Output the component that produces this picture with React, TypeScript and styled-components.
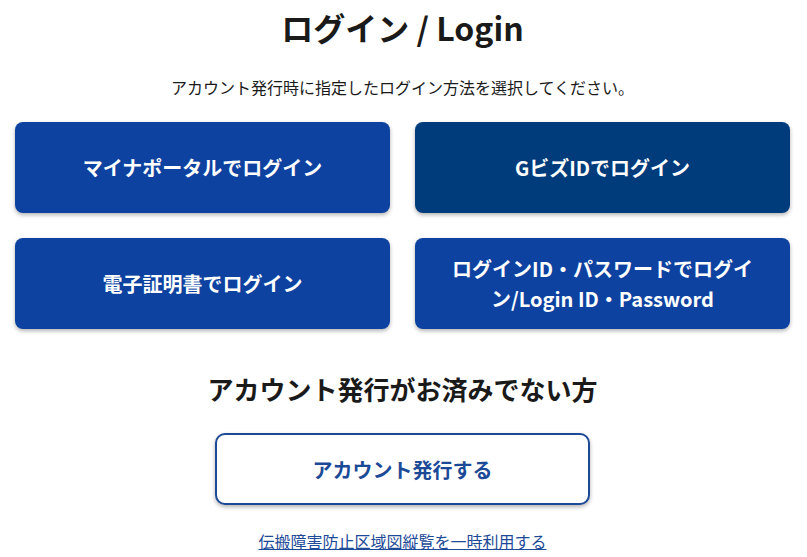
import React from "react";
import styled, { createGlobalStyle } from "styled-components";

const Global = createGlobalStyle`
  html, body { margin: 0; padding: 0; background: #ffffff; }
  body { font-family: "Noto Sans CJK JP", "Noto Sans", sans-serif; color: #1a1a1a; }
`;

const Page = styled.main`
  display: flex;
  flex-direction: column;
  align-items: center;
  padding: 3px 17px 0 15px;
`;

const Title = styled.h1`
  margin: 0;
  font-size: 32px;
  line-height: 48px;
  font-weight: 700;
  color: #1a1a1a;
`;

const Lead = styled.p`
  margin: 24px 0 0;
  font-size: 16px;
  line-height: 24px;
  color: #1a1a1a;
`;

const Grid = styled.div`
  margin-top: 23px;
  width: 775px;
  display: grid;
  grid-template-columns: 1fr 1fr;
  gap: 25px;
`;

const LoginButton = styled.button<{ $dark?: boolean }>`
  height: 91px;
  border: none;
  border-radius: 8px;
  padding: 0 30px;
  background: ${(p) => (p.$dark ? "#003c7c" : "#0e42a0")};
  color: #ffffff;
  font-family: "Noto Sans CJK JP", "Noto Sans", sans-serif;
  font-size: 20px;
  font-weight: 700;
  line-height: 30px;
  box-shadow: 0 2px 4px rgba(0, 0, 0, 0.3);
  cursor: pointer;
`;

const Heading = styled.h2`
  margin: 42px 0 0;
  font-size: 26px;
  line-height: 36px;
  font-weight: 700;
  color: #1a1a1a;
`;

const OutlineButton = styled.button`
  margin-top: 26px;
  width: 375px;
  height: 72px;
  border: 2px solid #1c4a97;
  border-radius: 10px;
  background: #ffffff;
  color: #1c4a97;
  font-family: "Noto Sans CJK JP", "Noto Sans", sans-serif;
  font-size: 20px;
  font-weight: 700;
  box-shadow: 0 2px 4px rgba(0, 0, 0, 0.3);
  cursor: pointer;
`;

const TextLink = styled.a`
  margin-top: 24px;
  font-size: 16px;
  line-height: 24px;
  color: #1c4a97;
  text-decoration: underline;
  cursor: pointer;
`;

export default function App() {
  return (
    <>
      <Global />
      <Page>
        <Title>ログイン / Login</Title>
        <Lead>アカウント発行時に指定したログイン方法を選択してください。</Lead>
        <Grid>
          <LoginButton>マイナポータルでログイン</LoginButton>
          <LoginButton $dark>GビズIDでログイン</LoginButton>
          <LoginButton>電子証明書でログイン</LoginButton>
          <LoginButton>ログインID・パスワードでログイン/Login ID・Password</LoginButton>
        </Grid>
        <Heading>アカウント発行がお済みでない方</Heading>
        <OutlineButton>アカウント発行する</OutlineButton>
        <TextLink>伝搬障害防止区域図縦覧を一時利用する</TextLink>
      </Page>
    </>
  );
}
